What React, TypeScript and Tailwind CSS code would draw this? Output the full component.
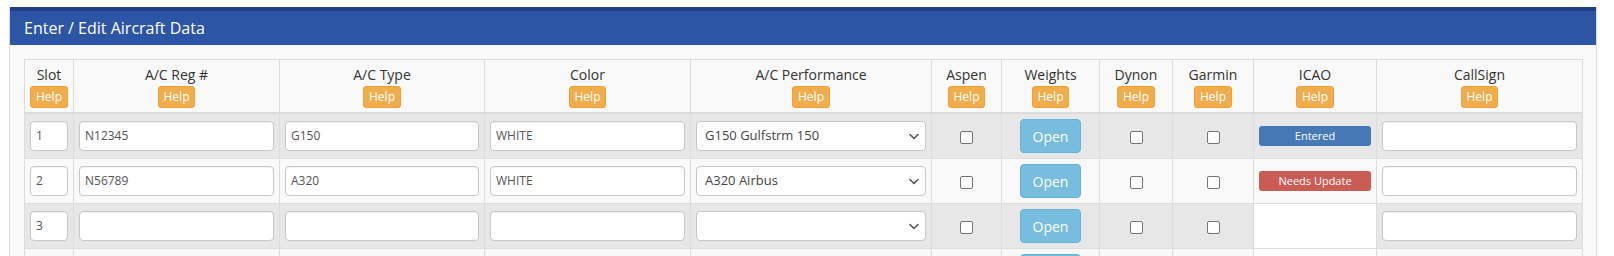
import type { ReactNode } from 'react'

const columns: { name: string; width: number }[] = [
  { name: 'Slot', width: 49 },
  { name: 'A/C Reg #', width: 206 },
  { name: 'A/C Type', width: 205 },
  { name: 'Color', width: 206 },
  { name: 'A/C Performance', width: 241 },
  { name: 'Aspen', width: 70 },
  { name: 'Weights', width: 98 },
  { name: 'Dynon', width: 73 },
  { name: 'Garmin', width: 81 },
  { name: 'ICAO', width: 123 },
  { name: 'CallSign', width: 206 },
]

type Row = { slot: string; reg: string; type: string; color: string; perf: string; icao?: 'entered' | 'update' }

const rows: Row[] = [
  { slot: '1', reg: 'N12345', type: 'G150', color: 'WHITE', perf: 'G150 Gulfstrm 150', icao: 'entered' },
  { slot: '2', reg: 'N56789', type: 'A320', color: 'WHITE', perf: 'A320 Airbus', icao: 'update' },
  { slot: '3', reg: '', type: '', color: '', perf: '' },
  { slot: '4', reg: '', type: '', color: '', perf: '' },
]

function TextInput({ value }: { value: string }) {
  return (
    <div className="flex h-[30px] w-full items-center rounded-[4px] border border-[#c8c8c8] bg-white px-[5px] text-[12px] text-[#555] shadow-[inset_0_1px_1px_rgba(0,0,0,0.06)]">
      {value}
    </div>
  )
}

function Select({ value }: { value: string }) {
  return (
    <div className="flex h-[30px] w-full items-center justify-between rounded-[4px] border border-[#c8c8c8] bg-white pl-[8px] pr-[6px] text-[13px] text-[#444]">
      <span>{value}</span>
      <svg width="10" height="7" viewBox="0 0 10 7" fill="none">
        <path d="M1 1.5 L5 5.5 L9 1.5" stroke="#555" strokeWidth="1.6" strokeLinecap="round" strokeLinejoin="round" />
      </svg>
    </div>
  )
}

function Checkbox() {
  return <span className="inline-block size-[13px] rounded-[2px] border border-[#767676] bg-white align-middle" />
}

function Cell({ children, className = '' }: { children?: ReactNode; className?: string }) {
  return <td className={`border border-[#ddd] p-[5px] align-middle ${className}`}>{children}</td>
}

export default function App() {
  return (
    <div className="min-h-screen bg-white pl-[9px] pr-[17px] pt-[7px] font-['Open_Sans',sans-serif] text-[#333]">
      <div className="border border-t-0 border-[#ddd] bg-[#f9f9f9]">
        <div className="flex h-[38px] items-center border-t-4 border-[#213f86] bg-[#2c56a5] px-[14px] text-[16px] text-white">
          Enter / Edit Aircraft Data
        </div>
        <div className="p-[14px]">
          <table className="w-full table-fixed border-collapse border border-[#ddd]">
            <colgroup>
              {columns.map((c) => (
                <col key={c.name} style={{ width: c.width }} />
              ))}
            </colgroup>
            <thead>
              <tr className="bg-[#f9f9f9]">
                {columns.map((c) => (
                  <th key={c.name} className="border border-b-2 border-[#ddd] px-[5px] pt-[4px] pb-[4px] text-center text-[14px] leading-[21px] font-normal">
                    <div>{c.name}</div>
                    <button className="mt-px h-[22px] rounded-[3px] border border-[#eea236] bg-[#f0ad4e] px-[5px] text-[12px] leading-[18px] text-white">
                      Help
                    </button>
                  </th>
                ))}
              </tr>
            </thead>
            <tbody>
              {rows.map((r, i) => (
                <tr key={r.slot} className={i % 2 === 0 ? 'bg-[#e7e7e7]' : 'bg-[#f9f9f9]'}>
                  <Cell>
                    <TextInput value={r.slot} />
                  </Cell>
                  <Cell>
                    <TextInput value={r.reg} />
                  </Cell>
                  <Cell>
                    <TextInput value={r.type} />
                  </Cell>
                  <Cell>
                    <TextInput value={r.color} />
                  </Cell>
                  <Cell>
                    <Select value={r.perf} />
                  </Cell>
                  <Cell className="text-center">
                    <Checkbox />
                  </Cell>
                  <Cell className="text-center">
                    <button className="h-[34px] rounded-[4px] border border-[#66b3d9] bg-[#78bcde] px-[12px] text-[14px] text-white">
                      Open
                    </button>
                  </Cell>
                  <Cell className="text-center">
                    <Checkbox />
                  </Cell>
                  <Cell className="text-center">
                    <Checkbox />
                  </Cell>
                  <Cell className={r.icao ? '' : 'bg-white'}>
                    {r.icao === 'entered' && (
                      <div className="flex h-[20px] items-center justify-center rounded-[3px] bg-[#4679b5] text-[11px] text-white">
                        Entered
                      </div>
                    )}
                    {r.icao === 'update' && (
                      <div className="flex h-[20px] items-center justify-center rounded-[3px] bg-[#cb5b55] text-[11px] text-white">
                        Needs Update
                      </div>
                    )}
                  </Cell>
                  <Cell>
                    <TextInput value="" />
                  </Cell>
                </tr>
              ))}
            </tbody>
          </table>
        </div>
      </div>
    </div>
  )
}
